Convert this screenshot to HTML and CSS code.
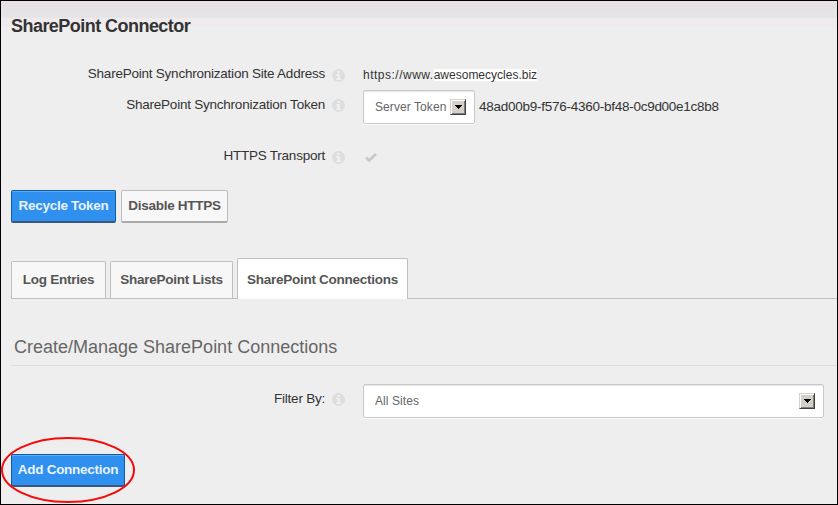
FILE: index.html
```
<!DOCTYPE html>
<html lang="en">
<head>
<meta charset="utf-8">
<title>SharePoint Connector</title>
<link rel="stylesheet" href="styles.css">
</head>
<body>
<svg class="defs" aria-hidden="true">
  <symbol id="info" viewBox="0 0 13 13">
    <circle cx="6.5" cy="6.5" r="6.5" fill="#dedede"/>
    <path d="M5.3 2h2.5v2H5.3zM4.3 5h3.500v4.500h1.200v1.500H4.200V9.500h1.200V6.500H4.300z" fill="#f0f0f0"/>
  </symbol>
  <symbol id="arrow" viewBox="0 0 7 4"><path d="M0 0h7v1H6v1H5v1H4v1H3V3H2V2H1V1H0z" fill="#000"/></symbol>
</svg>
<main class="page">
  <h1 class="title">SharePoint Connector</h1>
  <section class="settings">
    <div class="row row-address">
      <span class="label">SharePoint Synchronization Site Address</span>
      <svg class="info"><use href="#info"/></svg>
      <span class="value">https://www.<span class="domain">awesomecycles.biz</span></span>
    </div>
    <div class="row row-token">
      <span class="label">SharePoint Synchronization Token</span>
      <svg class="info"><use href="#info"/></svg>
      <div class="select select-token"><span>Server Token</span><span class="drop"><svg><use href="#arrow"/></svg></span></div>
      <span class="token">48ad00b9-f576-4360-bf48-0c9d00e1c8b8</span>
    </div>
    <div class="row row-https">
      <span class="label">HTTPS Transport</span>
      <svg class="info"><use href="#info"/></svg>
      <svg class="check" viewBox="0 0 12 9"><path d="M1 4.500l3.200 3L11 1" fill="none" stroke="#c9c9c9" stroke-width="2.600"/></svg>
    </div>
  </section>
  <div class="actions">
    <button class="btn primary recycle">Recycle Token</button>
    <button class="btn disable">Disable HTTPS</button>
  </div>
  <nav class="tabs">
    <a class="tab log">Log Entries</a>
    <a class="tab lists">SharePoint Lists</a>
    <a class="tab active">SharePoint Connections</a>
  </nav>
  <h2 class="heading">Create/Manage SharePoint Connections</h2>
  <div class="row row-filter">
    <span class="label">Filter By:</span>
    <svg class="info"><use href="#info"/></svg>
    <div class="select select-sites"><span>All Sites</span><span class="drop"><svg><use href="#arrow"/></svg></span></div>
  </div>
  <div class="add-wrap">
    <button class="btn primary add">Add Connection</button>
    <svg class="ring" viewBox="0 0 136 68"><ellipse cx="68" cy="34" rx="66" ry="32" fill="none" stroke="#f50a0a" stroke-width="2"/></svg>
  </div>
</main>
</body>
</html>
```
FILE: styles.css
```
* { box-sizing: border-box; }
body { margin: 0; font-family: "Liberation Sans", Arial, sans-serif; font-size: 13.5px; letter-spacing: -.23px; color: #333; }
.defs { position: absolute; width: 0; height: 0; }
.page {
  width: 838px; height: 505px; border: 1px solid #000; padding-left: 10px; overflow: hidden;
  background: linear-gradient(#e7e1e6 0 8px, #e5e5e6 8px 17px, #efeaee 17px 25px, #eee 25px);
}
.title { margin: 14px 0 0; height: 22px; font-size: 18px; line-height: 22px; letter-spacing: -.54px; }
.settings { padding-top: 27px; }
.row { display: flex; align-items: flex-start; line-height: 16px; }
.row-address { height: 25px; }
.row-address .label { margin-top: 2px; }
.row-token { height: 51px; }
.label { width: 314px; text-align: right; white-space: nowrap; }
.info { flex: none; width: 13px; height: 13px; margin: 5px 18px 0 7px; }
.value { margin-top: 4px; font-size: 12px; line-height: 15px; letter-spacing: .5px; }
.domain { letter-spacing: 0; background: linear-gradient(#fff, #fff) 0 1px / 100% 12px no-repeat; }
.row-token .label { margin-top: 8px; }
.row-token .info { margin-top: 10px; }
.row-token .select { margin-top: 1px; }
.token { margin: 10px 0 0 4px; letter-spacing: -.26px; white-space: nowrap; }
.row-https { margin-top: 7px; height: 43px; }
.row-https .label { margin-top: 1px; }
.row-https .info { margin-top: 4px; }
.check { width: 12px; height: 9px; margin: 6px 0 0 2px; }
.select {
  display: flex; align-items: center; height: 34px; padding: 0 8px 0 11px; border: 1px solid #c9c9c9; border-radius: 2px;
  background: #fff; box-shadow: 0 1px #fafafa, inset 0 1px 1px #eae4e6; font-size: 12px; letter-spacing: .08px; color: #666; white-space: nowrap;
}
.select-token { width: 112px; }
.select-sites { width: 461px; }
.drop {
  flex: none; display: flex; align-items: center; justify-content: center; width: 16px; height: 16px; margin-left: auto;
  background: #d4d0c8; border: 1px solid; border-color: #d4d0c8 #404040 #404040 #d4d0c8;
  box-shadow: inset 1px 1px #fff, inset -1px -1px #808080;
}
.drop svg { width: 7px; height: 4px; }
.actions { display: flex; gap: 5px; }
.btn {
  display: flex; align-items: center; justify-content: center; height: 33px; padding: 0 0 2px; border: 1px solid #bdbdbd; border-bottom: 2px solid #aaa;
  border-radius: 2px; background: #f7f7f7; color: #555; font: bold 13.5px "Liberation Sans", Arial, sans-serif; letter-spacing: -.26px; white-space: nowrap;
}
.primary { background: #3090f0; border-color: #105a9f; border-bottom-color: #39597c; color: #e9f3ff; box-shadow: inset 0 1px #61abf2; }
.recycle { width: 105px; }
.disable { width: 107px; }
.tabs { display: flex; align-items: flex-end; gap: 4px; height: 41px; margin-top: 35px; border-bottom: 1px solid #bfbfbf; }
.tab {
  display: flex; align-items: center; justify-content: center; height: 37px; padding-bottom: 2px; border: 1px solid #bfbfbf; border-bottom-width: 0;
  border-radius: 2px 2px 0 0; background: #f7f7f7; color: #555; font-weight: bold; letter-spacing: -.26px; white-space: nowrap;
}
.log { width: 95px; }
.lists { width: 123px; }
.active { width: 171px; height: 41px; margin-bottom: -1px; padding-bottom: 0; background: #fff; }
.heading { margin: 37px 0 0; padding-left: 3px; height: 30px; border-bottom: 1px solid #dcdcdc; font-size: 18px; font-weight: normal; letter-spacing: 0; line-height: 22px; color: #666; }
.row-filter { margin-top: 18px; height: 70px; }
.row-filter .label { margin-top: 7px; }
.row-filter .info { margin-top: 9px; }
.add-wrap { position: relative; width: 114px; }
.add { width: 114px; }
.ring { position: absolute; left: -11px; top: -18px; width: 136px; height: 68px; }
```
